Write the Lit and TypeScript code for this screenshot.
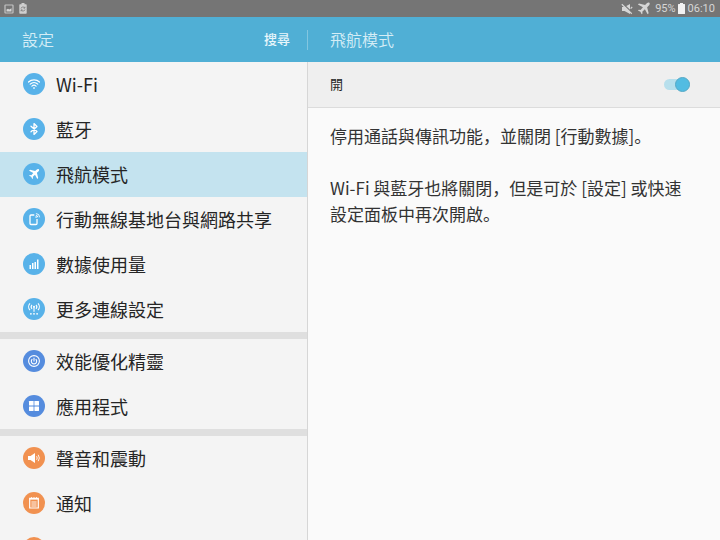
import { LitElement, html, css, svg } from "lit";
import { customElement, property, state } from "lit/decorators.js";
import { classMap } from "lit/directives/class-map.js";

const plane = svg`<path d="M21.6 2.4c-1-1-2.7-.8-3.9.4L14.3 6.200 4 3.600 2.200 5.400l8.500 4.600-4 4.400-3-.4L2.200 15.500l4.200 2.100 2.100 4.200 1.500-1.500-.4-3 4.400-4 4.600 8.500 1.800-1.800L17.800 9.700l3.400-3.400c1.200-1.200 1.400-2.900.4-3.900z" fill="currentColor"/>`;

const glyphs = {
  wifi: svg`<g fill="none" stroke="currentColor" stroke-width="1.200" stroke-linecap="round">
      <path d="M5.500 9a8.100 8.100 0 0 1 11 0"/><path d="M7.200 11.100a5.600 5.600 0 0 1 7.600 0"/><path d="M8.900 13.100a3.200 3.200 0 0 1 4.200 0"/></g>
      <path d="M9.800 14.700a1.800 1.800 0 0 1 2.400 0L11 16.200z" fill="currentColor"/>`,
  bluetooth: svg`<path d="M8 8.200l6 5.400-3 2.800V5.600l3 2.800-6 5.400" fill="none" stroke="currentColor" stroke-width="1.300" stroke-linejoin="round" stroke-linecap="round"/>`,
  plane: svg`<g transform="translate(5 5) scale(.5)">${plane}</g>`,
  tether: svg`<path d="M11.300 7H8a1 1 0 0 0-1 1v7.500a1 1 0 0 0 1 1h5a1 1 0 0 0 1-1V11" fill="none" stroke="currentColor" stroke-width="1.300"/>
      <g fill="none" stroke="currentColor" stroke-width=".9"><path d="M12.900 7.400a1.900 1.900 0 0 1 1.900 1.900"/><path d="M12.900 5.600a3.700 3.700 0 0 1 3.700 3.700"/></g><circle cx="13.100" cy="9.100" r=".8" fill="currentColor"/>`,
  data: svg`<g fill="currentColor"><rect x="6.500" y="12" width="1.500" height="4"/><rect x="9" y="10" width="1.500" height="6"/><rect x="11.500" y="9" width="1.500" height="7"/><rect x="14" y="6.500" width="1.500" height="9.500"/></g>`,
  more: svg`<g fill="none" stroke="currentColor" stroke-width="1.100"><path d="M7 5.400a5 5 0 0 0 0 6.800M15 5.400a5 5 0 0 1 0 6.800M9 6.800a3 3 0 0 0 0 4M13 6.800a3 3 0 0 1 0 4M11 9v4.800"/></g>
      <g fill="currentColor"><circle cx="11" cy="8.800" r="1"/><circle cx="7.900" cy="15.800" r=".9"/><circle cx="11" cy="15.800" r=".9"/><circle cx="14.100" cy="15.800" r=".9"/></g>`,
  smart: svg`<g fill="none" stroke="currentColor" stroke-width="1.100"><circle cx="11" cy="11" r="5.400"/><path d="M9.300 9.100a2.700 2.700 0 1 0 3.400 0M11 7.800v3.600"/></g>`,
  apps: svg`<g fill="currentColor"><rect x="6" y="6" width="4.600" height="4.600" rx=".4"/><rect x="11.400" y="6" width="4.600" height="4.600" rx=".4"/><rect x="6" y="11.400" width="4.600" height="4.600" rx=".4"/><rect x="11.400" y="11.400" width="4.600" height="4.600" rx=".4"/></g>`,
  sound: svg`<path d="M5 9h2.500L12 6v10l-4.500-3H5z" fill="currentColor"/><path d="M13.600 9.200a3.200 3.200 0 0 1 0 3.600M15.200 7.800a5.500 5.500 0 0 1 0 6.400" fill="none" stroke="currentColor" stroke-width=".9"/>`,
  notice: svg`<path d="M6.700 6.400h8.600v9.600H6.700z" fill="none" stroke="currentColor" stroke-width="1.200"/><path d="M6.700 7.200h8.600M8.400 10h5.200M8.400 12h5.200M8.400 14h5.200" stroke="currentColor" stroke-width=".9"/><path d="M8.500 5v2M11 5v2M13.500 5v2" stroke="currentColor" stroke-width=".8"/>`,
  display: svg`<circle cx="11" cy="11" r="4" fill="currentColor"/>`,
};

type Item = { id: keyof typeof glyphs; label: string };
type Group = { tone: string; items: Item[] };

const groups: Group[] = [
  {
    tone: "sky",
    items: [
      { id: "wifi", label: "Wi-Fi" },
      { id: "bluetooth", label: "藍牙" },
      { id: "plane", label: "飛航模式" },
      { id: "tether", label: "行動無線基地台與網路共享" },
      { id: "data", label: "數據使用量" },
      { id: "more", label: "更多連線設定" },
    ],
  },
  {
    tone: "blue",
    items: [
      { id: "smart", label: "效能優化精靈" },
      { id: "apps", label: "應用程式" },
    ],
  },
  {
    tone: "orange",
    items: [
      { id: "sound", label: "聲音和震動" },
      { id: "notice", label: "通知" },
      { id: "display", label: "" },
    ],
  },
];

@customElement("status-bar")
class StatusBar extends LitElement {
  static styles = css`
    :host {
      display: flex;
      align-items: center;
      justify-content: space-between;
      height: 17px;
      padding: 0 5px 0 4px;
      background: #757575;
      color: #d6d6d6;
      font-family: Roboto, sans-serif;
      font-size: 11px;
      line-height: 17px;
    }
    .side {
      display: flex;
      align-items: center;
    }
    .left {
      gap: 5px;
    }
    .right {
      gap: 3px;
    }
    .level {
      display: flex;
      align-items: center;
      gap: 2px;
    }
    svg {
      display: block;
    }
  `;
  render() {
    return html`
      <div class="side left">
        <svg width="10" height="10" viewBox="0 0 10 10"><rect x="1" y="1" width="8" height="8" rx=".5" fill="none" stroke="#c4c4c4" stroke-width="1.200" /><path d="M2.500 7.500V5.500l1.500-.7 1.300.7L7.500 4.200v3.300z" fill="#d6d6d6" /></svg>
        <svg width="8" height="11" viewBox="0 0 8 11"><path d="M2.500 0h3v1.300H7a.7.7 0 0 1 .7.700v8a.7.7 0 0 1-.7.700H1a.7.7 0 0 1-.7-.7V2a.7.7 0 0 1 .7-.7h1.500z" fill="#cfcfcf" /><path d="M2 5.500a2 1.800 0 0 1 3.700-.6M6 6.500a2 1.800 0 0 1-3.700.6M5.900 3.700v1.400H4.500M2.100 8.300V6.900h1.400" fill="none" stroke="#777" stroke-width=".8" /></svg>
      </div>
      <div class="side right">
        <svg width="12" height="12" viewBox="0 0 12 12"><path d="M1 4h2.500L9 1v10L3.500 8H1z" fill="currentColor" /><path d="M1.600.6l10 9.600" stroke="#757575" stroke-width="1.400" /><path d="M.8 1.200l10 9.600M9.600 5.600L11.200 4" stroke="currentColor" stroke-width="1.200" /></svg>
        <svg width="16" height="13" viewBox="-1 1 27 22">${plane}</svg>
        <div class="level">
          <span>95%</span>
          <svg width="7" height="11" viewBox="0 0 7 11"><path d="M2 0h3v1h1.500a.5.5 0 0 1 .5.500v9a.5.5 0 0 1-.5.500h-6a.5.5 0 0 1-.5-.5v-9A.5.5 0 0 1 .5 1H2z" fill="#f2f2f2" /></svg>
        </div>
        <span>06:10</span>
      </div>
    `;
  }
}

@customElement("settings-item")
class SettingsItem extends LitElement {
  @property() icon: keyof typeof glyphs = "wifi";
  @property() label = "";
  @property() tone = "sky";
  @property({ type: Boolean }) selected = false;
  static styles = css`
    :host {
      display: block;
    }
    .row {
      display: flex;
      align-items: center;
      gap: 11px;
      width: 100%;
      height: 45px;
      padding: 0 12px 1px 23px;
      border: 0;
      background: none;
      color: #252525;
      font: inherit;
      font-size: 18px;
      line-height: 28px;
      text-align: left;
      cursor: pointer;
    }
    .selected {
      background: #c4e3ef;
    }
    .icon {
      flex: none;
      width: 22px;
      height: 22px;
      border-radius: 50%;
      color: #fff;
    }
    .sky {
      background: #58b2e9;
    }
    .blue {
      background: #558cde;
    }
    .orange {
      background: #f19150;
    }
  `;
  render() {
    return html`<button class=${classMap({ row: true, selected: this.selected })} aria-current=${this.selected}>
      <svg class="icon ${this.tone}" viewBox="0 0 22 22" aria-hidden="true">${glyphs[this.icon]}</svg>
      <span>${this.label}</span>
    </button>`;
  }
}

@customElement("app-root")
class AppRoot extends LitElement {
  @state() current = "plane";
  @state() on = true;
  static styles = css`
    :host {
      display: flex;
      flex-direction: column;
      height: 100vh;
      overflow: hidden;
      background: #fafafa;
      color: #252525;
      font-family: "Noto Sans CJK SC", sans-serif;
    }
    .columns {
      display: grid;
      grid-template-columns: 77fr 103fr;
    }
    .bar {
      flex: none;
      align-items: center;
      height: 45px;
      background: #50afd5;
      color: #d5edf6;
    }
    .head {
      display: flex;
      align-items: center;
      justify-content: space-between;
      padding: 0 17px 0 22px;
    }
    .first {
      border-right: 1px solid #83c6e0;
      height: 20px;
    }
    h1,
    h2 {
      margin: 0;
      padding-bottom: 2px;
      font-size: 16px;
      line-height: 24px;
      font-weight: 350;
    }
    .search {
      padding: 0 0 2px;
      border: 0;
      background: none;
      color: #e9f6fb;
      font: inherit;
      font-size: 13px;
      line-height: 20px;
      font-weight: 500;
      cursor: pointer;
    }
    .body {
      flex: 1;
      min-height: 0;
    }
    .list {
      overflow: hidden;
      background: #f4f4f4;
      border-right: 1px solid #d6d6d6;
    }
    .group + .group {
      border-top: 7px solid #dfdfdf;
    }
    .toggle {
      display: flex;
      align-items: center;
      justify-content: space-between;
      height: 45px;
      padding: 0 30px 0 22px;
      background: #efefef;
      border-bottom: 1px solid #dcdcdc;
      font-size: 13px;
      line-height: 20px;
    }
    label {
      padding-bottom: 2px;
    }
    .switch {
      appearance: none;
      display: flex;
      align-items: center;
      width: 26px;
      height: 11px;
      margin: 0;
      border-radius: 6px;
      background: #b7dfec;
      cursor: pointer;
    }
    .switch::before {
      content: "";
      box-sizing: border-box;
      width: 15px;
      height: 15px;
      border: 1px solid #55a9c6;
      border-radius: 50%;
      background: #52bce2;
    }
    .switch:checked {
      justify-content: flex-end;
    }
    .text {
      padding: 15px 30px 16px 22px;
      color: #333;
      font-size: 17px;
      line-height: 26px;
    }
    p {
      margin: 0 0 26px;
    }
  `;
  render() {
    return html`
      <status-bar></status-bar>
      <header class="bar columns">
        <div class="head first">
          <h1>設定</h1>
          <button class="search">搜尋</button>
        </div>
        <div class="head"><h2>飛航模式</h2></div>
      </header>
      <div class="body columns">
        <nav class="list">
          ${groups.map(
            (g) => html`<div class="group">
              ${g.items.map(
                (i) => html`<settings-item
                  .icon=${i.id}
                  .label=${i.label}
                  .tone=${g.tone}
                  .selected=${i.id === this.current}
                  @click=${() => (this.current = i.id)}
                ></settings-item>`
              )}
            </div>`
          )}
        </nav>
        <main>
          <div class="toggle">
            <label for="flight">開</label>
            <input
              id="flight"
              class="switch"
              type="checkbox"
              role="switch"
              .checked=${this.on}
              @change=${(e: Event) => (this.on = (e.target as HTMLInputElement).checked)}
            />
          </div>
          <div class="text">
            <p>停用通話與傳訊功能，並關閉 [行動數據]。</p>
            <p>Wi-Fi 與藍牙也將關閉，但是可於 [設定] 或快速設定面板中再次開啟。</p>
          </div>
        </main>
      </div>
    `;
  }
}
